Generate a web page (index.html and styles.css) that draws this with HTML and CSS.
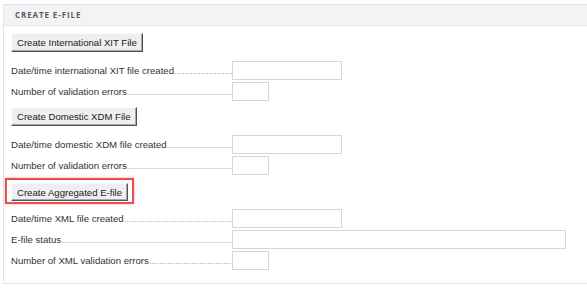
FILE: index.html
```html
<!DOCTYPE html>
<html>
<head>
<meta charset="utf-8">
<link rel="stylesheet" href="styles.css">
</head>
<body>
<div class="panel">
  <div class="panel-head">CREATE E-FILE</div>
  <div class="panel-body">
    <div class="btn-wrap first"><button class="btn">Create International XIT File</button></div>
    <div class="row"><span class="label">Date/time international XIT file created</span><span class="field wide"></span></div>
    <div class="row"><span class="label">Number of validation errors</span><span class="field small"></span></div>

    <div class="btn-wrap"><button class="btn">Create Domestic XDM File</button></div>
    <div class="row"><span class="label">Date/time domestic XDM file created</span><span class="field wide"></span></div>
    <div class="row"><span class="label">Number of validation errors</span><span class="field small"></span></div>

    <div class="btn-wrap highlight"><button class="btn">Create Aggregated E-file</button></div>
    <div class="row"><span class="label">Date/time XML file created</span><span class="field wide"></span></div>
    <div class="row"><span class="label">E-file status</span><span class="field full"></span></div>
    <div class="row"><span class="label">Number of XML validation errors</span><span class="field small"></span></div>
  </div>
</div>
</body>
</html>
```
FILE: styles.css
```css
html, body { margin: 0; padding: 0; background: #fff; }
body { padding: 4px 0 0 3px; font-family: "Liberation Sans", Arial, sans-serif; }
.panel {
  border: 1px solid #e3e4e6;
  border-right: none;
  height: 280px;
  box-sizing: border-box;
}
.panel-head {
  background: #f2f3f5;
  border-bottom: 1px solid #e3e4e6;
  height: 21px;
  box-sizing: border-box;
  padding: 0 0 0 11px;
  font-family: "Open Sans", sans-serif;
  font-weight: 700;
  font-size: 8px;
  letter-spacing: 0.9px;
  color: #595c61;
  line-height: 20px;
}
.panel-body { padding: 7px 0 0 7px; }
.btn-wrap { display: flex; height: 19px; align-items: flex-start; margin: 5px 0 8px; }
.btn-wrap.first { margin-top: 0; }
.btn {
  font-family: "Liberation Sans", Arial, sans-serif;
  font-size: 9.6px;
  color: #1a1a1a;
  background: #efefef;
  border: 1px solid;
  border-color: #fbfbfb #505050 #505050 #fbfbfb;
  box-shadow: inset -1px -1px 0 #a8a8a8;
  padding: 0 5px;
  height: 19px;
  line-height: 16px;
  margin: 0;
}
.btn-wrap.highlight {
  margin: 2px 0 4px -6px;
  padding: 3px 4px 1px;
  height: 18px;
  width: max-content;
  border: 2px solid #e8504f;
  box-shadow: 0 0 3px rgba(232,80,79,0.45);
}
.btn-wrap.highlight .btn { height: 18px; line-height: 15px; }
.row { display: flex; align-items: center; height: 21px; }
.label {
  width: 221px;
  flex: none;
  font-size: 9.6px;
  color: #333;
  white-space: nowrap;
  overflow: hidden;
  box-sizing: border-box;
}
.label::after {
  content: "....................................................................................................................";
  color: #a0a0a0;
}
.field {
  display: block;
  height: 19px;
  box-sizing: border-box;
  border: 1px solid #d6d6d6;
  background: #fff;
}
.field.wide { width: 110px; }
.field.small { width: 37px; }
.field.full { width: 334px; }
```
